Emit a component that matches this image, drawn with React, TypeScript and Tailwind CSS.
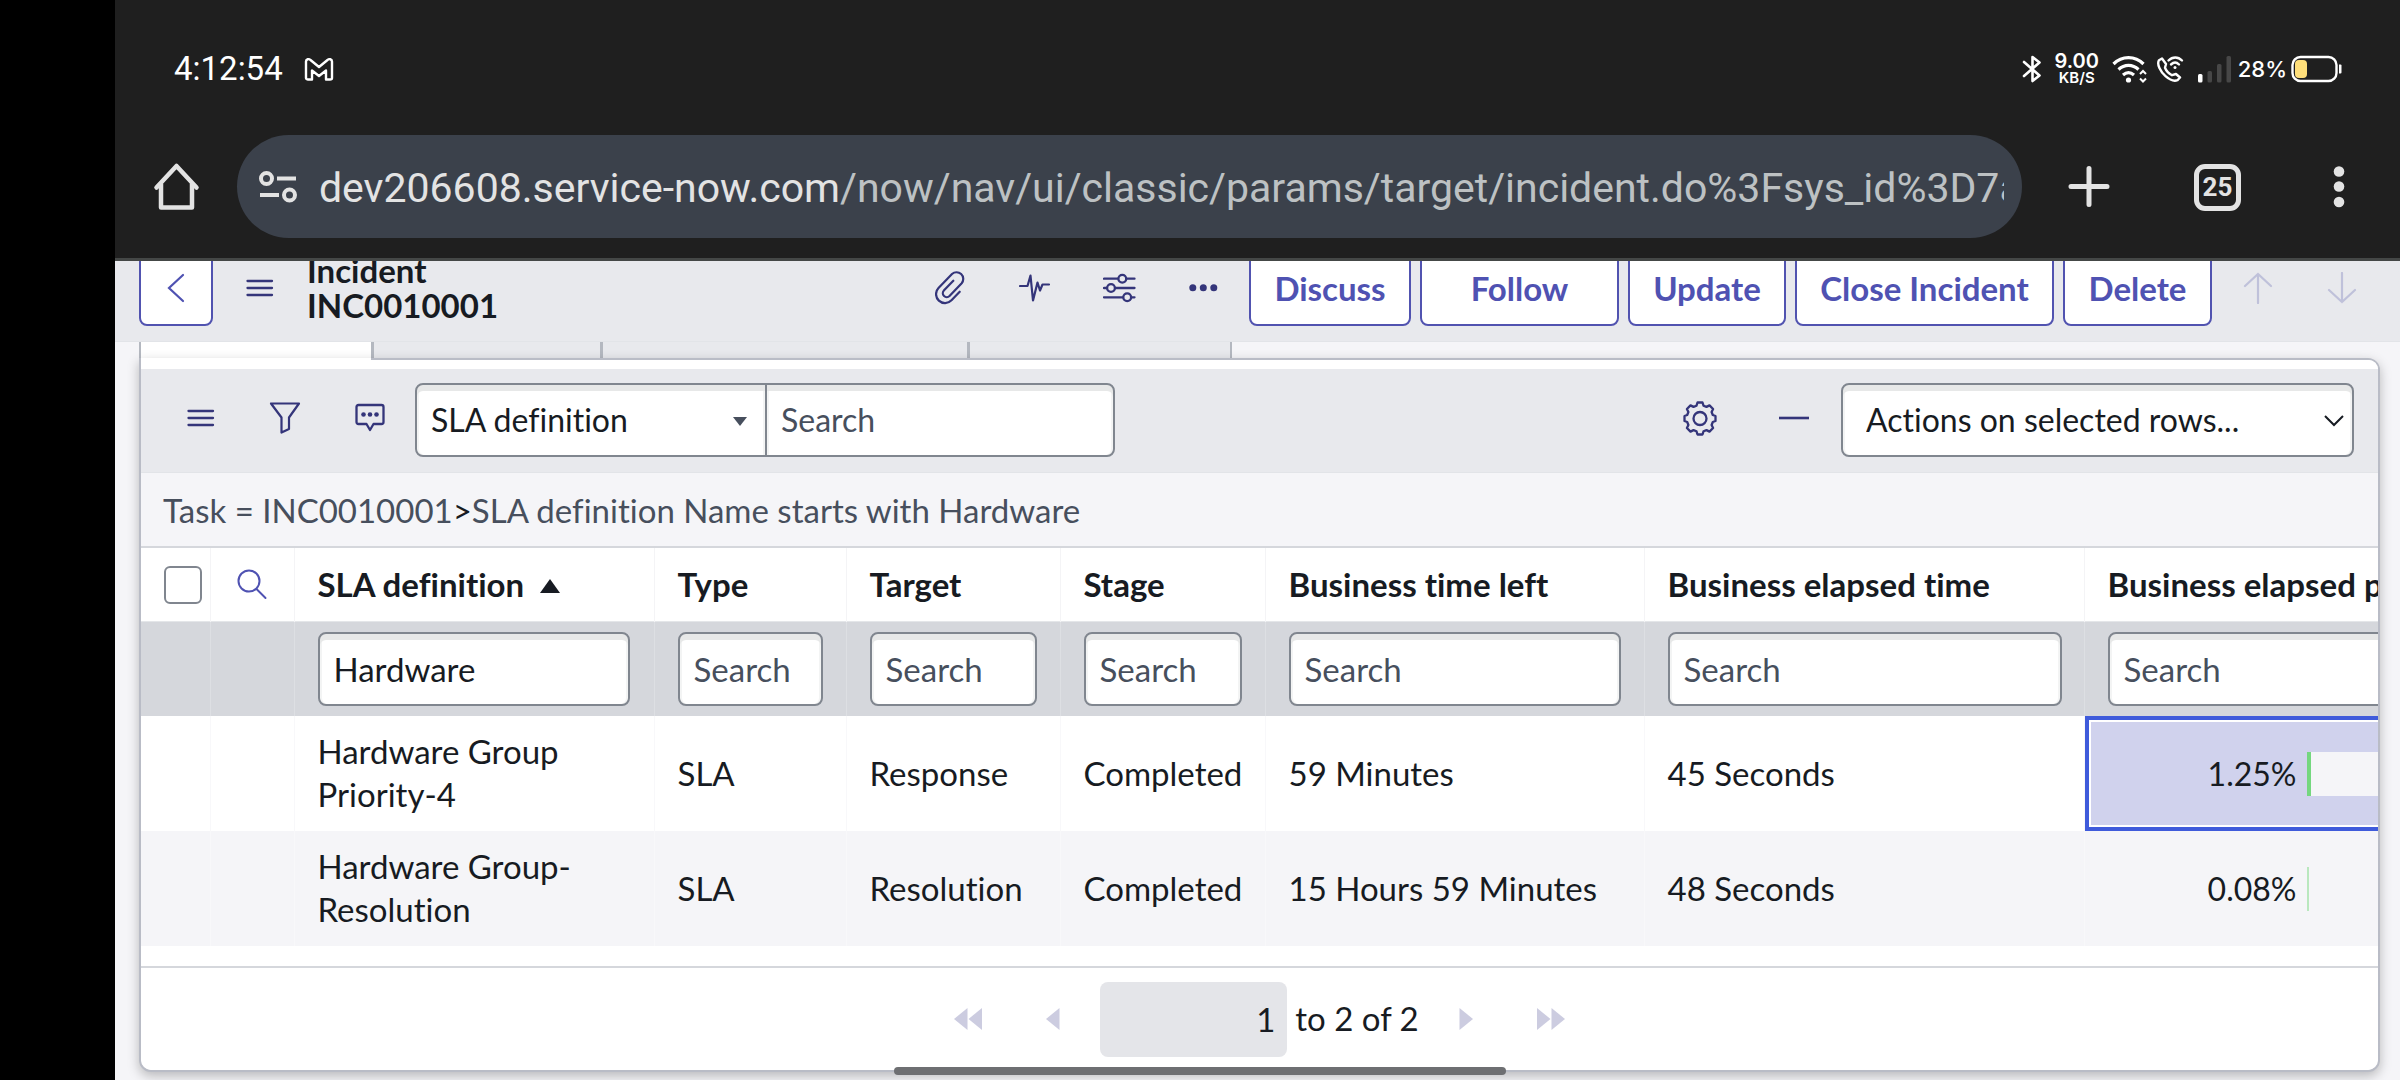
import React from "react";

const FIELD =
  "h-[74px] rounded-lg border-2 border-[#80868f] bg-white px-3.5 text-[#171b22] placeholder:text-[#474f5d] placeholder:opacity-100 shadow-[inset_0_6px_0_#e7e8e8,inset_2px_0_0_#f3f4f4,inset_-2px_0_0_#f3f4f4] outline-none";

const ACTION =
  "h-[84px] rounded-lg border-2 border-[#5153b0] bg-white text-[33px] font-bold text-[#4f52b2] pt-2.5";

function Bars() {
  return (
    <svg width="28" height="20" viewBox="0 0 28 20" fill="none" stroke="#34357a" strokeWidth="2.300" strokeLinecap="round">
      <path d="M1.500 3h24.500M1.500 10h24.500M1.500 17h24.500" />
    </svg>
  );
}

function StatusBar() {
  return (
    <div className="flex h-[135px] items-center pl-[59px] pr-[58px] pt-0.5 text-white">
      <span className="text-[33px] leading-10">4:12:54</span>
      <svg className="ml-[21px]" width="30" height="26" viewBox="0 0 30 26" fill="none" stroke="#fff" strokeWidth="2.400" strokeLinejoin="round">
        <path d="M2 22V5.500C2 3 5 2.500 6.500 4L15 11l8.500-7C25 2.500 28 3 28 5.500V22c0 1-1 1.500-2 1.500h-4V14.500L15 20l-7-5.500v9H4c-1 0-2-.5-2-1.500z" />
      </svg>
      <div className="ml-auto flex items-center">
        <svg width="20" height="28" viewBox="0 0 20 28" fill="none" stroke="#fff" strokeWidth="2.600" strokeLinejoin="round" strokeLinecap="round">
          <path d="M2 7l15.500 13.500L10.500 26V2l7 5.500L2 21" />
        </svg>
        <div className="ml-3.5 flex w-[42px] flex-col items-center font-['Inter'] font-semibold">
          <span className="text-xl leading-[17px]">9.00</span>
          <span className="text-[15px] leading-[15px]">KB/S</span>
        </div>
        <svg className="ml-3.5" width="36" height="28" viewBox="0 0 36 28" fill="none" stroke="#fff" strokeWidth="3.200">
          <path d="M1.500 9c8.500-8.500 21.500-8.500 30 0M6.500 14.500c6-5.500 14-5.500 20 0M11 20c3.500-3 7.500-3 11 0" />
          <circle cx="16.500" cy="25" r="2.600" fill="#fff" stroke="none" />
          <path d="M28 19l3-3 3 3M28 23.500l3 3 3-3" strokeWidth="2" />
        </svg>
        <svg className="ml-2" width="28" height="28" viewBox="0 0 28 28" fill="none" stroke="#fff" strokeWidth="2.400" strokeLinejoin="round" strokeLinecap="round">
          <path d="M6 3.500l-3 1.700c-2.500 4 1.500 11.500 6.500 16 4 3.500 8.500 5.300 12 4l2.500-2.700-4-3.500-4 1.200c-3-1.500-6-5-7-7.500l1-3.700z" />
          <path d="M12.500 5.500c4-4 9.500-4 13.500 0M15 9.500c2.700-2.500 5.500-2.500 8 0" />
          <circle cx="19" cy="12.500" r="1.500" fill="#fff" stroke="none" />
        </svg>
        <svg className="ml-3.5" width="34" height="28" viewBox="0 0 34 28">
          <rect x="0" y="19" width="4.500" height="8.500" rx="1.500" fill="#fff" />
          <rect x="9.500" y="16" width="4.500" height="11.500" rx="1.500" fill="#474747" />
          <rect x="19" y="9" width="4.500" height="18.500" rx="1.500" fill="#474747" />
          <rect x="28.500" y="1" width="4.500" height="26.500" rx="1.500" fill="#474747" />
        </svg>
        <span className="ml-1.5 font-['Inter'] text-[22px] font-medium leading-7">28%</span>
        <svg className="ml-1" width="51" height="28" viewBox="0 0 51 28" fill="none">
          <rect x="1.500" y="2" width="44" height="24" rx="8" stroke="#fff" strokeWidth="2.400" />
          <rect x="4" y="5" width="12" height="18" rx="4" fill="#ffdf7a" />
          <path d="M48 9.500h1.500q1 0 1 1v7q0 1-1 1H48z" fill="#fff" />
        </svg>
      </div>
    </div>
  );
}

function BrowserBar() {
  return (
    <div className="flex h-[123px] items-start pl-[38px] pr-[55px]">
      <button aria-label="Home" className="mt-[27px] shrink-0">
        <svg width="48" height="50" viewBox="0 0 48 50" fill="none" stroke="#e3e3e3" strokeWidth="4.500" strokeLinejoin="round" strokeLinecap="round">
          <path d="M3.500 25.500L23.500 4l20 21.500" />
          <path d="M8 22v23.500h31V22" />
        </svg>
      </button>
      <div className="ml-9 flex h-[103px] min-w-0 flex-1 items-center rounded-full bg-[#3b414b] pl-[22px] pr-[18px]">
        <svg className="shrink-0" width="38" height="32" viewBox="0 0 38 32" fill="none" stroke="#e3e3e3" strokeWidth="4">
          <circle cx="7.500" cy="7.500" r="5.500" />
          <path d="M18 7.500h19M1 24h19" />
          <circle cx="30.500" cy="24" r="5.500" />
        </svg>
        <div className="ml-[22px] min-w-0 flex-1 overflow-hidden whitespace-nowrap pt-0.5 text-[41px] leading-[52px] text-[#bdc1c3]">
          <a href="#url" className="text-[#e3e3e3]">dev206608.service-now.com</a>
          /now/nav/ui/classic/params/target/incident.do%3Fsys_id%3D7a
        </div>
      </div>
      <div className="mt-[27px] ml-[46px] flex items-center">
        <button aria-label="New tab">
          <svg width="42" height="50" viewBox="0 0 42 50" stroke="#e3e3e3" strokeWidth="5" strokeLinecap="round">
            <path d="M3 24.500h36M21 6.500v36" />
          </svg>
        </button>
        <button aria-label="Tabs" className="ml-[84px] flex size-[47px] items-center justify-center rounded-[11px] border-[5px] border-[#e3e3e3] text-[26px] font-bold text-[#e3e3e3]">
          25
        </button>
        <button aria-label="Menu" className="ml-[92px]">
          <svg width="12" height="50" viewBox="0 0 12 50" fill="#e3e3e3">
            <circle cx="6" cy="9.500" r="5.300" />
            <circle cx="6" cy="24.500" r="5.300" />
            <circle cx="6" cy="40" r="5.300" />
          </svg>
        </button>
      </div>
    </div>
  );
}

function FormHeader() {
  return (
    <header className="flex h-[81px] items-end overflow-hidden border-b border-[#e2e4e8] bg-[#e8e9ed] pb-[15px] pl-6 pr-[43px]">
      <button aria-label="Back" className="flex h-[84px] w-[74px] shrink-0 items-center justify-center rounded-lg border-2 border-[#5153b0] bg-white pt-2">
        <svg width="18" height="30" viewBox="0 0 18 30" fill="none" stroke="#4f52b2" strokeWidth="2.200" strokeLinecap="round">
          <path d="M16 2L2 15l14 13" />
        </svg>
      </button>
      <button aria-label="Additional actions" className="mb-[28px] ml-[33px]"><Bars /></button>
      <h1 className="mb-[3px] ml-[33px] text-[33px] font-bold leading-[35px] text-[#171b22]">
        Incident
        <br />
        INC0010001
      </h1>
      <div className="ml-auto flex shrink-0 items-end">
        <div className="mb-[20px] mr-[30px] flex items-center gap-[52px]">
          <button aria-label="Attachments">
            <svg width="32" height="36" viewBox="0 0 32 36" fill="none" stroke="#34357a" strokeWidth="2.200" strokeLinecap="round" strokeLinejoin="round">
              <path d="M24.700 21.700L16.500 30.300A8.900 8.900 0 0 1 3.500 18L17 4A6.700 6.700 0 0 1 26.700 13.200L14.500 26A3.930 3.930 0 0 1 8.800 20.600L18.300 10.700" />
            </svg>
          </button>
          <button aria-label="Activity">
            <svg width="32" height="36" viewBox="0 0 32 36" fill="none" stroke="#34357a" strokeWidth="2.200" strokeLinecap="round" strokeLinejoin="round">
              <path d="M1 16h7.500L11.500 5.500l2.500 25L18.500 12.500l2.500 8 2.500-6H30" />
            </svg>
          </button>
          <button aria-label="Personalize form">
            <svg width="34" height="36" viewBox="0 0 34 36" fill="none" stroke="#34357a" strokeWidth="2.300" strokeLinecap="round">
              <path d="M1 8.700H15M23.500 8.700H31.500M1 18H4M12 18h19.500M1 27.300H20M28.500 27.300h3" />
              <circle cx="19.300" cy="8.700" r="3.900" />
              <circle cx="8" cy="18" r="3.900" />
              <circle cx="24.200" cy="27.300" r="3.900" />
            </svg>
          </button>
          <button aria-label="More options">
            <svg width="30" height="36" viewBox="0 0 30 36" fill="#34357a">
              <circle cx="3.800" cy="17.700" r="3.500" />
              <circle cx="14.300" cy="17.700" r="3.500" />
              <circle cx="24.800" cy="17.700" r="3.500" />
            </svg>
          </button>
        </div>
        <div className="flex gap-[9px]">
          <button className={ACTION + " w-[162px]"}>Discuss</button>
          <button className={ACTION + " w-[199px]"}>Follow</button>
          <button className={ACTION + " w-[158px]"}>Update</button>
          <button className={ACTION + " w-[259px]"}>Close Incident</button>
          <button className={ACTION + " w-[149px]"}>Delete</button>
        </div>
        <div className="mb-[22px] ml-[31px] flex gap-[54px]">
          <button aria-label="Previous record">
            <svg width="30" height="32" viewBox="0 0 30 32" fill="none" stroke="#bfc1da" strokeWidth="2.200" strokeLinecap="round">
              <path d="M15 31V2M2 14L15 2l13 12" />
            </svg>
          </button>
          <button aria-label="Next record">
            <svg width="30" height="32" viewBox="0 0 30 32" fill="none" stroke="#bfc1da" strokeWidth="2.200" strokeLinecap="round">
              <path d="M15 1v29M2 18l13 12 13-12" />
            </svg>
          </button>
        </div>
      </div>
    </header>
  );
}

function Toolbar() {
  return (
    <div className="flex h-[104px] items-center border-b border-[#e2e4e8] bg-[#e8e9ed] pb-0.5 pl-[46px] pr-6 text-[32px]">
      <div className="mb-1 flex items-center gap-[54px]">
        <button aria-label="List menu"><Bars /></button>
        <button aria-label="Filter">
          <svg width="32" height="34" viewBox="0 0 32 34" fill="none" stroke="#34357a" strokeWidth="2.200" strokeLinejoin="round">
            <path d="M2 2.500h28L20 16.500v11.500l-7.500 3.500v-15z" />
          </svg>
        </button>
        <button aria-label="Comments">
          <svg width="30" height="30" viewBox="0 0 30 30" fill="none" stroke="#34357a" strokeWidth="2.300" strokeLinejoin="round">
            <path d="M3.500 2h23q2 0 2 2v15q0 2-2 2h-8L15 27l-3.500-6h-8q-2 0-2-2V4q0-2 2-2z" />
            <g fill="#34357a" stroke="none">
              <circle cx="8.500" cy="11.500" r="2.300" />
              <circle cx="15" cy="11.500" r="2.300" />
              <circle cx="21.500" cy="11.500" r="2.300" />
            </g>
          </svg>
        </button>
      </div>
      <div className="relative ml-[30px]">
        <select aria-label="Search field" className={FIELD + " w-[352px] appearance-none rounded-r-none"}>
          <option>SLA definition</option>
        </select>
        <svg className="pointer-events-none absolute top-[34px] right-5" width="14" height="9" viewBox="0 0 14 9" fill="#474f5d">
          <path d="M0 0h14L7 9z" />
        </svg>
      </div>
      <input aria-label="Search" placeholder="Search" className={FIELD + " -ml-0.5 w-[350px] rounded-l-none"} />
      <button aria-label="List settings" className="mb-1 ml-auto">
        <svg width="36" height="36" viewBox="0 0 36 36" fill="none" stroke="#34357a" strokeWidth="2.300" strokeLinejoin="round">
          <path d="M15.500 2.500h5l1 3.200 3 1.200 3-1.500 3.600 3.600-1.500 3 1.200 3 2.700 1v5l-2.700 1-1.200 3 1.500 3-3.600 3.600-3-1.500-3 1.200-1 3.200h-5l-1-3.200-3-1.200-3 1.500L4.900 28l1.500-3-1.200-3-2.700-1v-5l2.700-1 1.200-3-1.500-3 3.600-3.600 3 1.500 3-1.200z" />
          <circle cx="18" cy="18.500" r="6.500" />
        </svg>
      </button>
      <button aria-label="Collapse list" className="mb-1 ml-[60px]">
        <svg width="32" height="6" viewBox="0 0 32 6" stroke="#34357a" strokeWidth="2.600"><path d="M1 3h30" /></svg>
      </button>
      <div className="relative ml-[31px]">
        <select aria-label="Actions on selected rows" className={FIELD + " w-[513px] appearance-none pl-[23px]"}>
          <option>Actions on selected rows...</option>
        </select>
        <svg className="pointer-events-none absolute top-8 right-2.5" width="20" height="12" viewBox="0 0 20 12" fill="none" stroke="#171b22" strokeWidth="2">
          <path d="M1 1l9 9 9-9" />
        </svg>
      </div>
    </div>
  );
}

const COLUMNS = [
  { name: "SLA definition", value: "Hardware", width: "w-[312px]" },
  { name: "Type", width: "w-[145px]" },
  { name: "Target", width: "w-[167px]" },
  { name: "Stage", width: "w-[158px]" },
  { name: "Business time left", width: "w-[332px]" },
  { name: "Business elapsed time", width: "w-[394px]" },
  { name: "Business elapsed percentage", width: "w-[450px]" },
];

const ROWS = [
  { cells: ["Hardware Group Priority-4", "SLA", "Response", "Completed", "59 Minutes", "45 Seconds"], percent: "1.25%" },
  { cells: ["Hardware Group-Resolution", "SLA", "Resolution", "Completed", "15 Hours 59 Minutes", "48 Seconds"], percent: "0.08%" },
];

function SlaTable() {
  return (
    <table className="w-[2440px] table-fixed border-collapse text-left text-[33px] leading-[43px] text-[#171b22]">
      <colgroup>
        <col className="w-[69px]" />
        <col className="w-[84px]" />
        <col className="w-[360px]" />
        <col className="w-[192px]" />
        <col className="w-[214px]" />
        <col className="w-[205px]" />
        <col className="w-[379px]" />
        <col className="w-[440px]" />
        <col />
      </colgroup>
      <thead>
        <tr className="h-[73px] border-b border-[#e4e6e9]">
          <th className="border-r border-[#f4f4f6] pl-[23px]">
            <input type="checkbox" aria-label="Select all rows" className="mt-0.5 block h-[38px] w-[38px] appearance-none rounded-md border-2 border-[#80868f] bg-white" />
          </th>
          <th className="border-r border-[#f4f4f6] pl-[26px]">
            <button aria-label="Toggle column search" className="block">
              <svg width="30" height="32" viewBox="0 0 30 32" fill="none" stroke="#4f52b2" strokeWidth="2" strokeLinecap="round">
                <circle cx="12" cy="13" r="10.500" />
                <path d="M19.500 21L28.500 30" />
              </svg>
            </button>
          </th>
          {COLUMNS.map((c, i) => (
            <th key={c.name} className="whitespace-nowrap border-r border-[#f4f4f6] pl-[23px] font-bold">
              {c.name}
              {i === 0 && (
                <svg className="ml-4 inline-block align-[4px]" width="20" height="14" viewBox="0 0 20 14" fill="#171b22">
                  <path d="M10 0L20 14H0z" />
                </svg>
              )}
            </th>
          ))}
        </tr>
        <tr className="h-[95px] bg-[#d5d7dc]">
          <td className="border-r border-[#dddfe3]" />
          <td className="border-r border-[#dddfe3]" />
          {COLUMNS.map((c) => (
            <td key={c.name} className="border-r border-[#dddfe3] pl-[23px]">
              <input aria-label={"Search " + c.name} placeholder="Search" defaultValue={c.value} className={FIELD + " block " + c.width} />
            </td>
          ))}
        </tr>
      </thead>
      <tbody>
        {ROWS.map((r, n) => (
          <tr key={n} className="h-[115px] even:bg-[#f5f5f8]">
            <td className="border-r border-[#f8f8fa]" />
            <td className="border-r border-[#f8f8fa]" />
            {r.cells.map((t, i) => (
              <td key={i} className={i === 0 ? "border-r border-[#f8f8fa] pb-0.5 pl-[23px] pr-16" : "whitespace-nowrap border-r border-[#f8f8fa] pl-[23px]"}>
                {t}
              </td>
            ))}
            <td className="p-0">
              <div
                className={
                  n === 0
                    ? "flex h-[115px] items-center border-4 border-[#3f5bdb] bg-[#d0d2ed] shadow-[inset_0_0_0_2px_#fff]"
                    : "flex h-[115px] items-center border-4 border-transparent"
                }
              >
                <span className="w-[208px] text-right text-[32px]">{r.percent}</span>
                <span className="ml-2.5 flex h-[44px] flex-1 bg-[#f5f5f8]">
                  <span className={n === 0 ? "w-1 bg-[#74d77f]" : "w-0.5 bg-[#b9e8be]"} />
                </span>
              </div>
            </td>
          </tr>
        ))}
      </tbody>
    </table>
  );
}

function Arrow({ double = false, flip = false }) {
  return (
    <svg className={flip ? "rotate-180" : ""} width={double ? 28 : 14} height="22" viewBox={double ? "0 0 28 22" : "0 0 14 22"} fill="#cccce0">
      <path d="M13.500 0v22L0 11z" />
      {double && <path d="M28 0v22L14.500 11z" />}
    </svg>
  );
}

function Pager() {
  return (
    <div className="flex h-[104px] items-center justify-center border-t-2 border-[#d5d7dc] bg-white text-[33px] text-[#171b22]">
      <button aria-label="First page"><Arrow double /></button>
      <button aria-label="Previous page" className="ml-16"><Arrow /></button>
      <input aria-label="Row" defaultValue="1" className="ml-10 h-[75px] w-[187px] rounded-lg bg-[#e4e5e9] px-3 text-right outline-none" />
      <span className="ml-2">to 2 of 2</span>
      <button aria-label="Next page" className="ml-10"><Arrow flip /></button>
      <button aria-label="Last page" className="ml-16"><Arrow double flip /></button>
    </div>
  );
}

export default function App() {
  return (
    <div className="flex h-screen overflow-hidden bg-black pl-[115px]">
      <div className="relative flex min-w-0 flex-1 flex-col bg-[#f5f5f8] font-['Lato',sans-serif] [font-variant-ligatures:none]">
        <div className="border-b-[3px] border-[#444746] bg-[#1f1f1f] font-['Roboto',sans-serif]">
          <StatusBar />
          <BrowserBar />
        </div>
        <FormHeader />
        <main className="ml-6 mr-5 flex flex-col">
          <div className="flex h-4">
            <div className="w-[232px] border-l-2 border-[#b4b8c0] bg-white" />
            <div className="w-[229px] border-l-[3px] border-[#b4b8c0] bg-[#e8e9ed]" />
            <div className="w-[367px] border-l-[3px] border-[#b4b8c0] bg-[#e8e9ed]" />
            <div className="w-[265px] border-x-[3px] border-r-2 border-[#b4b8c0] bg-[#e8e9ed]" />
          </div>
          <div className="rounded-b-xl rounded-tr-xl border-2 border-[#b9bcc6] bg-white shadow-[0_4px_12px_rgba(0,0,0,0.25)]">
            <div className="relative h-[9px] rounded-tr-xl bg-white">
              <div className="absolute -top-0.5 left-0 h-0.5 w-[230px] bg-white" />
            </div>
            <Toolbar />
            <nav className="flex h-[75px] items-center border-b-2 border-[#d5d7dc] bg-[#f5f5f8] pl-[22px] pt-0.5 text-[33px] text-[#474f5d]">
              <a href="#task">Task = INC0010001</a>
              <span className="text-[#171b22]">&gt;</span>
              <a href="#sla">SLA definition Name starts with Hardware</a>
            </nav>
            <div className="overflow-hidden pb-5">
              <SlaTable />
            </div>
            <div className="overflow-hidden rounded-b-xl">
              <Pager />
            </div>
          </div>
        </main>
      </div>
      <div className="absolute bottom-[5px] left-[894px] h-2 w-[612px] rounded-full bg-[#6e6f72]" />
    </div>
  );
}
